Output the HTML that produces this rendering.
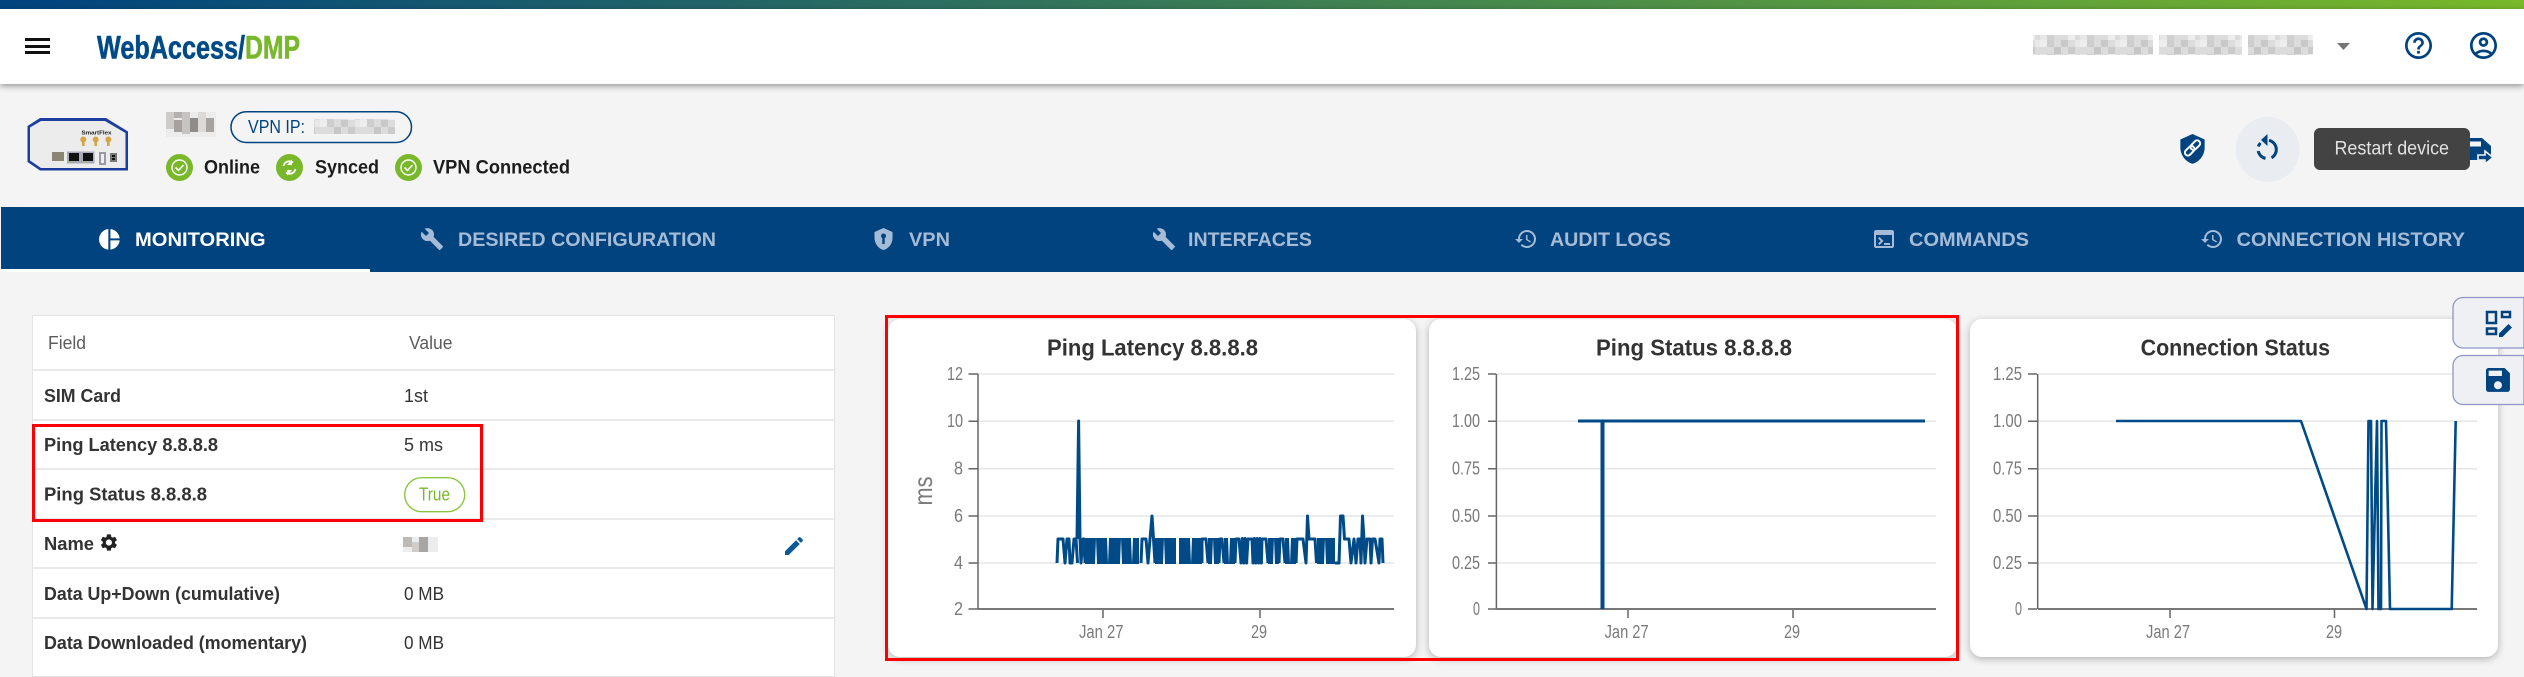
<!DOCTYPE html>
<html lang="en">
<head>
<meta charset="utf-8">
<title>WebAccess/DMP</title>
<style>
html,body{margin:0;padding:0;width:2524px;height:664px;overflow:hidden;background:#f4f4f4;font-family:"Liberation Sans",sans-serif}
.abs{position:absolute}
#bar{left:0;top:0;width:2524px;height:9px;background:linear-gradient(90deg,#00437f,#78b82a)}
#hdr{left:0;top:9px;width:2524px;height:75px;background:#fff;box-shadow:0 2px 6px rgba(0,0,0,.4)}
#tabs{left:1px;top:207px;width:2523px;height:65px;background:#00437f}
#tabline{left:1px;top:269px;width:369px;height:3px;background:#fff}
#table{left:32px;top:315px;width:801px;height:360px;background:#fff;border:1px solid #e4e4e4}
.card{top:319px;width:528px;height:338px;background:#fff;border-radius:12px;box-shadow:0 2px 8px rgba(0,0,0,.28)}
svg{position:absolute;left:0;top:0}
text{font-family:"Liberation Sans",sans-serif}
.b{font-weight:700}
.r{fill:#333;font-size:18.5px;font-weight:700}
.v{fill:#333;font-size:18.5px}
.t{fill:#333;font-size:23px;font-weight:700}
.ax{fill:#7a7a7a;font-size:18px}
.tab{fill:#a6bcd6;font-size:19px;font-weight:700}
.ti{fill:#a6bcd6}
.g{stroke:#e6e6e6;stroke-width:1.5;fill:none}
.a{stroke:#666;stroke-width:1.5;fill:none}
.l{stroke:#e3e3e3;stroke-width:1.5}
.d{stroke:#004b87;fill:none;stroke-linejoin:round}
</style>
</head>
<body>
<div id="bar" class="abs"></div>
<div id="hdr" class="abs"></div>
<div id="tabs" class="abs"></div>
<div id="tabline" class="abs"></div>
<div id="table" class="abs"></div>
<div class="card abs" style="left:888px"></div>
<div class="card abs" style="left:1429px"></div>
<div class="card abs" style="left:1970px"></div>

<svg width="2524" height="664" viewBox="0 0 2524 664" xmlns="http://www.w3.org/2000/svg">
<defs>
<pattern id="mz" width="40" height="20" patternUnits="userSpaceOnUse">
<rect width="40" height="20" fill="#dcdcdc"/>
<rect x="0" y="0" width="7" height="7" fill="#eeeeee"/>
<rect x="7" y="0" width="7" height="7" fill="#cdcdcd"/>
<rect x="21" y="0" width="7" height="7" fill="#c8c8c8"/>
<rect x="14" y="7" width="7" height="7" fill="#c6c6c6"/>
<rect x="28" y="7" width="7" height="7" fill="#cbcbcb"/>
<rect x="0" y="14" width="7" height="6" fill="#e8e8e8"/>
<rect x="7" y="14" width="7" height="6" fill="#d0d0d0"/>
<rect x="28" y="14" width="7" height="6" fill="#eeeeee"/>
<rect x="35" y="0" width="5" height="7" fill="#e8e8e8"/>
</pattern>
</defs>

<!-- Header -->
<g fill="#111"><rect x="25" y="38" width="25" height="3"/><rect x="25" y="45" width="25" height="3"/><rect x="25" y="51" width="25" height="3"/></g>
<text x="97" y="58.5" font-size="32" font-weight="700" fill="#004b87" stroke="#004b87" stroke-width=".6" textLength="148" lengthAdjust="spacingAndGlyphs">WebAccess/</text>
<text x="245" y="58.5" font-size="32" font-weight="700" fill="#78b82a" stroke="#78b82a" stroke-width=".6" textLength="55" lengthAdjust="spacingAndGlyphs">DMP</text>
<rect x="2033" y="35" width="120" height="20" fill="url(#mz)"/>
<rect x="2159" y="35" width="83" height="20" fill="url(#mz)"/>
<rect x="2248" y="35" width="65" height="20" fill="url(#mz)"/>
<path d="M2337 43h13l-6.5 7z" fill="#757575"/>
<path transform="translate(2402.3,29.3) scale(1.35)" fill="#00437f" d="M11 18h2v-2h-2v2zm1-16C6.48 2 2 6.48 2 12s4.48 10 10 10 10-4.48 10-10S17.52 2 12 2zm0 18c-4.41 0-8-3.59-8-8s3.59-8 8-8 8 3.59 8 8-3.59 8-8 8zm0-14c-2.21 0-4 1.79-4 4h2c0-1.1.9-2 2-2s2 .9 2 2c0 2-3 1.75-3 5h2c0-2.25 3-2.5 3-5 0-2.21-1.79-4-4-4z"/>
<path transform="translate(2467.3,29.3) scale(1.35)" fill="#00437f" d="M12 2C6.48 2 2 6.48 2 12s4.48 10 10 10 10-4.48 10-10S17.52 2 12 2zM7.35 18.5C8.66 17.56 10.26 17 12 17s3.34.56 4.65 1.5c-1.31.94-2.91 1.5-4.65 1.5s-3.34-.56-4.65-1.5zm10.79-1.38C16.45 15.8 14.32 15 12 15s-4.45.8-6.14 2.12C4.7 15.73 4 13.95 4 12c0-4.42 3.58-8 8-8s8 3.58 8 8c0 1.95-.7 3.73-1.86 5.12zM12 6c-1.93 0-3.5 1.57-3.5 3.5S10.07 13 12 13s3.5-1.57 3.5-3.5S13.93 6 12 6zm0 5c-.83 0-1.5-.67-1.5-1.5S11.17 8 12 8s1.5.67 1.5 1.5S12.83 11 12 11z"/>

<!-- Device image -->
<path d="M27.5 126 40 118H106L128 131.5V170.5H40L27.5 162Z" fill="#1c3f9f"/>
<path d="M30 127.5 41 121H105L125.5 133V168H41L30 160.5Z" fill="#ececec"/>
<text x="81.5" y="134.5" font-size="5.5" font-weight="700" fill="#222" textLength="30" lengthAdjust="spacingAndGlyphs">SmartFlex</text>
<g fill="#d9a441"><circle cx="83.3" cy="139.5" r="3"/><circle cx="95.7" cy="139.5" r="3"/><circle cx="108.3" cy="139.5" r="3"/><rect x="82" y="140" width="2.6" height="6"/><rect x="94.4" y="140" width="2.6" height="6"/><rect x="107" y="140" width="2.6" height="6"/></g>
<rect x="52" y="152" width="12" height="9" fill="#8d8573"/>
<rect x="67" y="151.5" width="14" height="12" fill="#aab"/>
<rect x="80.5" y="151.5" width="14" height="12" fill="#aab"/>
<rect x="69" y="153" width="10" height="8" fill="#111"/>
<rect x="83" y="153" width="10" height="8" fill="#111"/>
<rect x="70" y="161" width="2" height="1.5" fill="#9c3"/><rect x="84" y="161" width="2" height="1.5" fill="#9c3"/>
<rect x="99" y="152" width="7" height="13" fill="#99a"/>
<rect x="101" y="154" width="3" height="9" fill="#eee"/>
<rect x="110" y="153" width="7" height="9" fill="#777"/>
<rect x="112" y="155" width="3" height="2" fill="#111"/><rect x="112" y="158" width="3" height="2" fill="#111"/>

<!-- Device name + VPN -->
<g>
<rect x="166" y="112" width="50" height="25" fill="#ececec"/>
<rect x="166" y="112" width="8" height="17" fill="#cfcbc8"/>
<rect x="174" y="120" width="8" height="12" fill="#a6a19e"/>
<rect x="182" y="112" width="8" height="22" fill="#c7c3c0"/>
<rect x="190" y="118" width="8" height="14" fill="#8f8b88"/>
<rect x="198" y="112" width="8" height="20" fill="#dcd9d7"/>
<rect x="206" y="118" width="8" height="14" fill="#a5a2a0"/>
<rect x="174" y="112" width="8" height="6" fill="#b4b0ad"/>
</g>
<rect x="231" y="111.7" width="180.5" height="30.8" rx="15.4" fill="none" stroke="#00437f" stroke-width="1.5"/>
<text x="248" y="133" font-size="18" fill="#00437f" textLength="57" lengthAdjust="spacingAndGlyphs">VPN IP:</text>
<rect x="314" y="119" width="81" height="15" fill="url(#mz)"/>

<!-- Status -->
<g>
<circle cx="179.5" cy="167.5" r="13.5" fill="#78b82a"/>
<circle cx="179.5" cy="167.5" r="7.5" fill="none" stroke="#fff" stroke-width="1.4"/>
<path d="M175.5 167.5l3 3 5-5.5" fill="none" stroke="#fff" stroke-width="1.6"/>
<text class="b" x="204" y="173.5" font-size="19" fill="#1c1c1c" textLength="56" lengthAdjust="spacingAndGlyphs">Online</text>
<circle cx="289.5" cy="167.5" r="13.5" fill="#78b82a"/>
<path d="M283.5 166a6 6 0 0 1 9.5-3.5M295.5 169a6 6 0 0 1-9.5 3.5" fill="none" stroke="#fff" stroke-width="1.8"/>
<path d="M292 159.5v5.5h-5zM287 175.5v-5.5h5z" fill="#fff"/>
<text class="b" x="315" y="173.5" font-size="19" fill="#1c1c1c" textLength="64" lengthAdjust="spacingAndGlyphs">Synced</text>
<circle cx="408.5" cy="167.5" r="13.5" fill="#78b82a"/>
<circle cx="408.5" cy="167.5" r="7.5" fill="none" stroke="#fff" stroke-width="1.4"/>
<path d="M404.5 167.5l3 3 5-5.5" fill="none" stroke="#fff" stroke-width="1.6"/>
<text class="b" x="433" y="173.5" font-size="19" fill="#1c1c1c" textLength="137" lengthAdjust="spacingAndGlyphs">VPN Connected</text>
</g>

<!-- Right actions -->
<path transform="translate(2176.3,132.7) scale(1.35)" fill="#00437f" d="M12 1 3 5v6c0 5.55 3.84 10.74 9 12 5.16-1.26 9-6.45 9-12V5z"/>
<g transform="rotate(-45 2192.5 148)" fill="none" stroke="#fff" stroke-width="2">
<rect x="2183" y="145" width="11" height="6" rx="3"/>
<rect x="2191" y="145" width="11" height="6" rx="3"/>
</g>
<ellipse cx="2267.7" cy="149.5" rx="32" ry="32.5" fill="#e9edf1"/>
<g fill="none" stroke="#00437f" stroke-width="3">
<path d="M2269 140.3A9.5 9.5 0 0 1 2271.5 157.8"/>
<path d="M2265.5 158.4A9.5 9.5 0 0 1 2258.2 151"/>
<path d="M2258.3 146.5A9.5 9.5 0 0 1 2260.5 143"/>
</g>
<path d="M2267.5 134 2261 140 2267.5 146Z" fill="#00437f"/>
<path d="M2462 138H2482L2491 146V160H2462Z" fill="#00437f"/>
<path d="M2470 141.5H2481V146.5H2470Z" fill="#f4f4f4"/>
<path d="M2478 155h7v-4l8 6.5-8 6.5v-4h-7z" fill="#00437f" stroke="#f4f4f4" stroke-width="1.6"/>
<rect x="2314" y="128" width="156" height="42" rx="6" fill="#434343"/>
<text x="2334.5" y="154.5" font-size="19" fill="#e2e2e2" textLength="114.5" lengthAdjust="spacingAndGlyphs">Restart device</text>

<!-- Tabs -->
<path transform="translate(97,227) scale(1.03)" fill="#fff" d="M11 2v20c-5.07-.5-9-4.79-9-10s3.93-9.5 9-10zm2.03 0v8.99H22c-.47-4.74-4.24-8.52-8.97-8.99zm0 11.01V22c4.74-.47 8.5-4.25 8.97-8.99h-8.97z"/>
<text x="135" y="246" class="tab" style="fill:#fff" textLength="130.6" lengthAdjust="spacingAndGlyphs">MONITORING</text>
<path class="ti" transform="translate(420,227)" d="M22.7 19l-9.1-9.1c.9-2.3.4-5-1.5-6.9-2-2-5-2.4-7.4-1.3L9 6 6 9 1.6 4.7C.4 7.1.9 10.1 2.9 12.1c1.9 1.9 4.6 2.4 6.9 1.5l9.1 9.1c.4.4 1 .4 1.4 0l2.3-2.3c.5-.4.5-1.1.1-1.4z"/>
<text x="458" y="246" class="tab" textLength="258" lengthAdjust="spacingAndGlyphs">DESIRED CONFIGURATION</text>
<path class="ti" transform="translate(871.5,227)" d="M12 1 3 5v6c0 5.55 3.84 10.74 9 12 5.16-1.26 9-6.45 9-12V5z"/>
<circle cx="883.5" cy="236" r="2.5" fill="#00437f"/><rect x="882.3" y="237" width="2.4" height="7" fill="#00437f"/>
<text x="909" y="246" class="tab" textLength="41" lengthAdjust="spacingAndGlyphs">VPN</text>
<path class="ti" transform="translate(1152,227)" d="M22.7 19l-9.1-9.1c.9-2.3.4-5-1.5-6.9-2-2-5-2.4-7.4-1.3L9 6 6 9 1.6 4.7C.4 7.1.9 10.1 2.9 12.1c1.9 1.9 4.6 2.4 6.9 1.5l9.1 9.1c.4.4 1 .4 1.4 0l2.3-2.3c.5-.4.5-1.1.1-1.4z"/>
<text x="1188" y="246" class="tab" textLength="124" lengthAdjust="spacingAndGlyphs">INTERFACES</text>
<path class="ti" transform="translate(1514,227)" d="M13 3c-4.97 0-9 4.03-9 9H1l3.89 3.89.07.14L9 12H6c0-3.87 3.13-7 7-7s7 3.13 7 7-3.13 7-7 7c-1.93 0-3.68-.79-4.94-2.06l-1.42 1.42C8.27 19.99 10.51 21 13 21c4.97 0 9-4.03 9-9s-4.03-9-9-9zm-1 5v5l4.28 2.54.72-1.21-3.5-2.08V8H12z"/>
<text x="1550" y="246" class="tab" textLength="121" lengthAdjust="spacingAndGlyphs">AUDIT LOGS</text>
<path class="ti" transform="translate(1872,227)" d="M20 3H4c-1.1 0-2 .9-2 2v14c0 1.1.9 2 2 2h16c1.1 0 2-.9 2-2V5c0-1.1-.9-2-2-2zm0 16H4V8h16v11zm-2-1h-6v-2h6v2zM7.5 18l-1.41-1.41L8.67 14l-2.59-2.59L7.5 10l4 4-4 4z"/>
<text x="1909" y="246" class="tab" textLength="120" lengthAdjust="spacingAndGlyphs">COMMANDS</text>
<path class="ti" transform="translate(2200,227)" d="M13 3c-4.97 0-9 4.03-9 9H1l3.89 3.89.07.14L9 12H6c0-3.87 3.13-7 7-7s7 3.13 7 7-3.13 7-7 7c-1.93 0-3.68-.79-4.94-2.06l-1.42 1.42C8.27 19.99 10.51 21 13 21c4.97 0 9-4.03 9-9s-4.03-9-9-9zm-1 5v5l4.28 2.54.72-1.21-3.5-2.08V8H12z"/>
<text x="2236.5" y="246" class="tab" textLength="228.5" lengthAdjust="spacingAndGlyphs">CONNECTION HISTORY</text>

<!-- Table -->
<g class="l">
<line x1="33" x2="834" y1="370" y2="370"/>
<line x1="33" x2="834" y1="420" y2="420"/>
<line x1="33" x2="834" y1="469" y2="469"/>
<line x1="33" x2="834" y1="519" y2="519"/>
<line x1="33" x2="834" y1="568" y2="568"/>
<line x1="33" x2="834" y1="618" y2="618"/>
</g>
<text x="48" y="349" font-size="18" fill="#5c5c5c" textLength="38" lengthAdjust="spacingAndGlyphs">Field</text>
<text x="409" y="349" font-size="18" fill="#5c5c5c" textLength="43.5" lengthAdjust="spacingAndGlyphs">Value</text>
<text class="r" x="44" y="402" textLength="77" lengthAdjust="spacingAndGlyphs">SIM Card</text>
<text class="v" x="404" y="402" textLength="24" lengthAdjust="spacingAndGlyphs">1st</text>
<text class="r" x="44" y="451" textLength="174" lengthAdjust="spacingAndGlyphs">Ping Latency 8.8.8.8</text>
<text class="v" x="404" y="451" textLength="39" lengthAdjust="spacingAndGlyphs">5 ms</text>
<text class="r" x="44" y="500.5" textLength="163" lengthAdjust="spacingAndGlyphs">Ping Status 8.8.8.8</text>
<rect x="404.7" y="477.7" width="60" height="34" rx="17" fill="#fff" stroke="#8cc63f" stroke-width="1.4"/>
<text x="419" y="500.5" font-size="18" fill="#78b82a" textLength="31" lengthAdjust="spacingAndGlyphs">True</text>
<text class="r" x="44" y="550" textLength="50" lengthAdjust="spacingAndGlyphs">Name</text>
<path transform="translate(98.7,532.3) scale(.85)" fill="#222" d="M19.14 12.94c.04-.3.06-.61.06-.94 0-.32-.02-.64-.07-.94l2.03-1.58c.18-.14.23-.41.12-.61l-1.92-3.32c-.12-.22-.37-.29-.59-.22l-2.39.96c-.5-.38-1.03-.7-1.62-.94l-.36-2.54c-.04-.24-.24-.41-.48-.41h-3.84c-.24 0-.43.17-.47.41l-.36 2.54c-.59.24-1.13.57-1.62.94l-2.39-.96c-.22-.08-.47 0-.59.22L2.74 8.87c-.12.21-.08.47.12.61l2.03 1.58c-.05.3-.09.63-.09.94s.02.64.07.94l-2.03 1.58c-.18.14-.23.41-.12.61l1.92 3.32c.12.22.37.29.59.22l2.39-.96c.5.38 1.03.7 1.62.94l.36 2.54c.05.24.24.41.48.41h3.84c.24 0 .44-.17.47-.41l.36-2.54c.59-.24 1.13-.56 1.62-.94l2.39.96c.22.08.47 0 .59-.22l1.92-3.32c.12-.22.07-.47-.12-.61l-2.01-1.58zM12 15.6c-1.98 0-3.6-1.62-3.6-3.6s1.62-3.6 3.6-3.6 3.6 1.62 3.6 3.6-1.62 3.6-3.6 3.6z"/>
<g>
<rect x="403" y="537" width="35" height="15" fill="#ececec"/>
<rect x="403" y="537" width="9" height="10" fill="#bdb9b7"/>
<rect x="412" y="542" width="7" height="10" fill="#cfccca"/>
<rect x="419" y="537" width="9" height="15" fill="#a8a5a3"/>
</g>
<path transform="translate(782,534)" fill="#0b5a96" d="M3 17.25V21h3.75L17.81 9.94l-3.75-3.75L3 17.25zM20.71 7.04c.39-.39.39-1.02 0-1.41l-2.34-2.34c-.39-.39-1.02-.39-1.41 0l-1.83 1.83 3.75 3.75 1.83-1.83z"/>
<text class="r" x="44" y="600" textLength="236" lengthAdjust="spacingAndGlyphs">Data Up+Down (cumulative)</text>
<text class="v" x="404" y="600" textLength="40" lengthAdjust="spacingAndGlyphs">0 MB</text>
<text class="r" x="44" y="649" textLength="263" lengthAdjust="spacingAndGlyphs">Data Downloaded (momentary)</text>
<text class="v" x="404" y="649" textLength="40" lengthAdjust="spacingAndGlyphs">0 MB</text>

<!-- Chart 1 -->
<text class="t" x="1047" y="355.5" textLength="211" lengthAdjust="spacingAndGlyphs">Ping Latency 8.8.8.8</text>
<g class="g"><path d="M978 374H1394M978 421.3H1394M978 468.7H1394M978 516H1394M978 563H1394"/></g>
<g class="ax">
<text x="947" y="380" textLength="16" lengthAdjust="spacingAndGlyphs">12</text>
<text x="947" y="427" textLength="16" lengthAdjust="spacingAndGlyphs">10</text>
<text x="954" y="474.5" textLength="9" lengthAdjust="spacingAndGlyphs">8</text>
<text x="954" y="522" textLength="9" lengthAdjust="spacingAndGlyphs">6</text>
<text x="954" y="569" textLength="9" lengthAdjust="spacingAndGlyphs">4</text>
<text x="954" y="615" textLength="9" lengthAdjust="spacingAndGlyphs">2</text>
<text x="1079" y="638" textLength="44.5" lengthAdjust="spacingAndGlyphs">Jan 27</text>
<text x="1251" y="638" textLength="16" lengthAdjust="spacingAndGlyphs">29</text>
</g>
<text transform="translate(932,505.5) rotate(-90)" font-size="26" fill="#7a7a7a" textLength="29" lengthAdjust="spacingAndGlyphs">ms</text>
<path class="a" d="M978 374V609M968.5 374H978M968.5 421.3H978M968.5 468.7H978M968.5 516H978M968.5 563H978M968.5 609H978M1103 609V618M1260 609V618"/>
<line x1="978" x2="1394" y1="609" y2="609" stroke="#777" stroke-width="2"/>
<g fill="#004b87">
<rect x="1085" y="538" width="54" height="26"/>
<rect x="1155" y="538" width="21" height="26"/>
<rect x="1179" y="538" width="23" height="26"/>
<rect x="1208" y="538" width="11" height="26"/>
<rect x="1224" y="538" width="11" height="26"/>
<rect x="1268" y="538" width="11" height="26"/>
<rect x="1285" y="538" width="11" height="26"/>
<rect x="1317" y="538" width="18" height="26"/>
</g>
<path class="d" stroke-width="3" d="M1057 563L1058 539H1063L1065 563L1067 539H1069L1070 563H1072L1074 539H1076L1077.5 563
M1077 539L1078.6 421L1080 539L1081 563L1083 539H1084L1085 563
M1141 563L1142 539H1146L1148 563L1150 539L1152 516L1153.5 539L1155 563
M1202 563L1202 539H1206L1208 563
M1219 563L1220 539H1222L1224 563
M1235 563L1236 539H1239L1241 563l1.4-24.5l1.4 24.5l1.4-24.5l1.4 24.5L1248 539H1252L1253 563l1.4-24.5l1.4 24.5l1.4-24.5l1.4 24.5l1.4-24.5l1.4 24.5L1262 539H1266L1268 563
M1279 563L1280 539H1283L1285 563
M1296 563L1297 539H1303L1306 563L1307.5 516L1309 539H1315L1316.5 563
M1335 563L1339 563L1340.5 516H1343L1344.5 539H1349L1351 563L1354 539L1356 563L1358 539H1360L1361 563L1362.5 516L1364 539L1365 563L1367 539H1370L1371 563L1372.5 539H1375L1379 563L1380 539H1382L1383 563"/>
<g fill="#fff">
<path d="M1096 538l-1 26h2zM1108 564l-1-26h2zM1121 538l-1 26h2zM1132 564l-1-26h2zM1164 538l-1 26h2zM1191 564l-1-26h2zM1213 538l-1 26h2zM1229 564l-1-26h2zM1274 538l-1 26h2zM1290 564l-1-26h2zM1325 538l-1 26h2z"/>
</g>

<!-- Chart 2 -->
<text class="t" x="1596" y="355.5" textLength="196" lengthAdjust="spacingAndGlyphs">Ping Status 8.8.8.8</text>
<g class="g"><path d="M1496 374H1936M1496 421.3H1936M1496 468.7H1936M1496 516H1936M1496 563H1936"/></g>
<g class="ax">
<text x="1452" y="380" textLength="28" lengthAdjust="spacingAndGlyphs">1.25</text>
<text x="1452" y="427" textLength="28" lengthAdjust="spacingAndGlyphs">1.00</text>
<text x="1452" y="474.5" textLength="28" lengthAdjust="spacingAndGlyphs">0.75</text>
<text x="1452" y="522" textLength="28" lengthAdjust="spacingAndGlyphs">0.50</text>
<text x="1452" y="569" textLength="28" lengthAdjust="spacingAndGlyphs">0.25</text>
<text x="1473" y="615" textLength="7" lengthAdjust="spacingAndGlyphs">0</text>
<text x="1604.6" y="638" textLength="44" lengthAdjust="spacingAndGlyphs">Jan 27</text>
<text x="1784" y="638" textLength="16" lengthAdjust="spacingAndGlyphs">29</text>
</g>
<path class="a" d="M1496.4 374V609M1488 374H1496M1488 421.3H1496M1488 468.7H1496M1488 516H1496M1488 563H1496M1488 609H1496M1628 609V618M1793 609V618"/>
<line x1="1496" x2="1936" y1="609" y2="609" stroke="#777" stroke-width="2"/>
<path class="d" stroke-width="3" d="M1578 421H1925"/>
<path class="d" stroke-width="4" d="M1602.5 421V609"/>

<!-- Chart 3 -->
<text class="t" x="2140.6" y="355.5" textLength="189.4" lengthAdjust="spacingAndGlyphs">Connection Status</text>
<g class="g"><path d="M2038 374H2477M2038 421.3H2477M2038 468.7H2477M2038 516H2477M2038 563H2477"/></g>
<g class="ax">
<text x="1993" y="380" textLength="29" lengthAdjust="spacingAndGlyphs">1.25</text>
<text x="1993" y="427" textLength="29" lengthAdjust="spacingAndGlyphs">1.00</text>
<text x="1993" y="474.5" textLength="29" lengthAdjust="spacingAndGlyphs">0.75</text>
<text x="1993" y="522" textLength="29" lengthAdjust="spacingAndGlyphs">0.50</text>
<text x="1993" y="569" textLength="29" lengthAdjust="spacingAndGlyphs">0.25</text>
<text x="2015" y="615" textLength="7" lengthAdjust="spacingAndGlyphs">0</text>
<text x="2146" y="638" textLength="44" lengthAdjust="spacingAndGlyphs">Jan 27</text>
<text x="2326" y="638" textLength="16" lengthAdjust="spacingAndGlyphs">29</text>
</g>
<path class="a" d="M2037.7 374V609M2028 374H2037M2028 421.3H2037M2028 468.7H2037M2028 516H2037M2028 563H2037M2028 609H2037M2170 609V618M2334.5 609V618"/>
<line x1="2038" x2="2477" y1="609" y2="609" stroke="#777" stroke-width="2"/>
<path class="d" stroke-width="2.6" d="M2116 421H2301L2366.5 609L2368.5 421H2371L2372.5 609L2377 421L2378.5 609H2381L2381.5 421H2386L2390 609H2451.7L2455.7 421"/>

<!-- Side buttons -->
<path d="M2524 297.5H2463a10 10 0 0 0-10 10V338a10 10 0 0 0 10 10H2524Z" fill="#eef0f3" stroke="#8f95c6" stroke-width="1.3"/>
<path d="M2524 355.5H2463a10 10 0 0 0-10 10V394.5a10 10 0 0 0 10 10H2524Z" fill="#eef0f3" stroke="#8f95c6" stroke-width="1.3"/>
<g fill="none" stroke="#00437f" stroke-width="2.5">
<rect x="2487" y="312" width="9" height="11"/>
<rect x="2502" y="312" width="8" height="5"/>
<rect x="2487" y="328.5" width="9" height="5.5"/>
</g>
<path d="M2499 337v-3.5L2508.5 324l3.5 3.5-9.5 9.5Z" fill="#00437f"/>
<path transform="translate(2482,364) scale(1.33)" fill="#00437f" d="M17 3H5c-1.11 0-2 .9-2 2v14c0 1.1.89 2 2 2h14c1.1 0 2-.9 2-2V7l-4-4zm-5 16c-1.66 0-3-1.34-3-3s1.34-3 3-3 3 1.34 3 3-1.34 3-3 3zm3-10H5V5h10v4z"/>

<!-- Red highlight boxes -->
<rect x="33.5" y="425.5" width="448" height="95" fill="none" stroke="#f00" stroke-width="3"/>
<rect x="886.5" y="316.5" width="1071" height="343" fill="none" stroke="#f00" stroke-width="3"/>
</svg>
</body>
</html>
